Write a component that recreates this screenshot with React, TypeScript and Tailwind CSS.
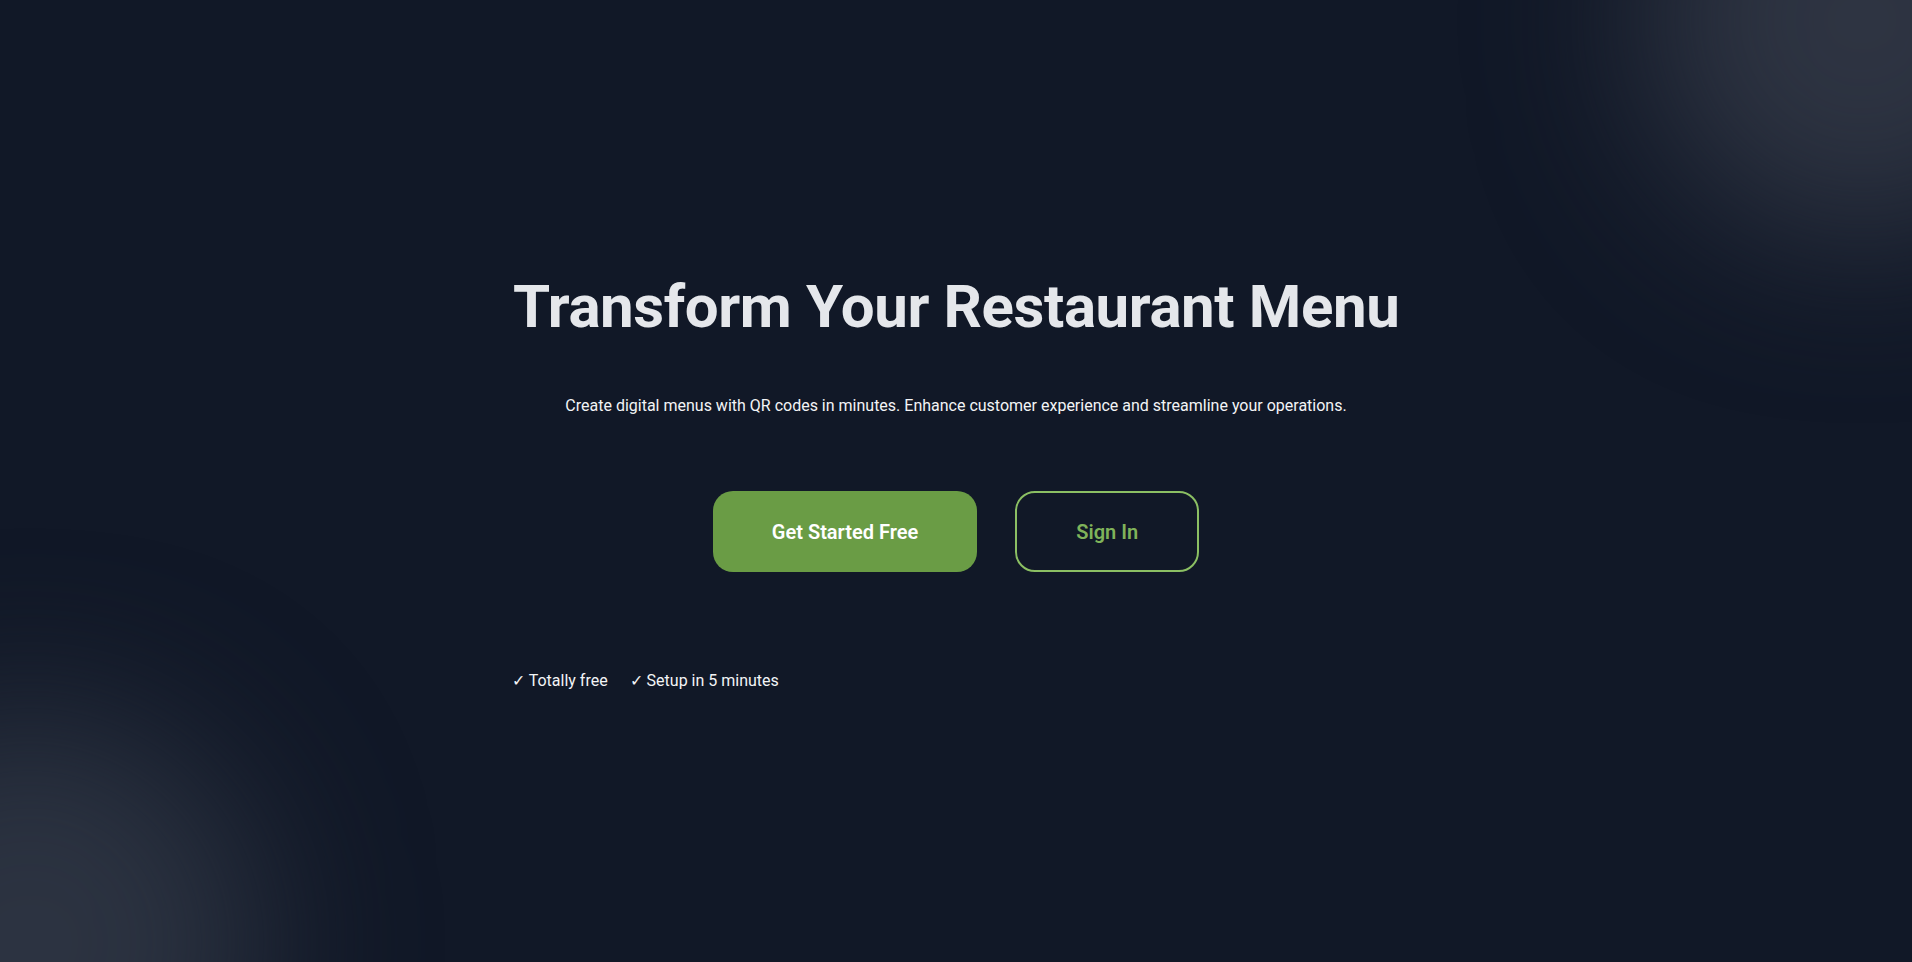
import React from "react";

const Hero = () => {
  const title = "Transform Your Restaurant Menu";
  const description =
    "Create digital menus with QR codes in minutes. Enhance customer experience and streamline your operations.";

  return (
    <div
      className="relative min-h-screen w-full overflow-hidden bg-[#111827]"
      style={{ fontFamily: "Roboto, 'Liberation Sans', sans-serif" }}
    >
      {/* soft glows */}
      <div className="pointer-events-none absolute -top-[200px] -right-[170px] h-[440px] w-[440px] rounded-full bg-[#2e3442] blur-[80px]" />
      <div className="pointer-events-none absolute -bottom-[210px] -left-[200px] h-[460px] w-[460px] rounded-full bg-[#2c3341] blur-[80px]" />

      <div className="relative flex min-h-screen items-center justify-center pt-2">
        <section className="mx-auto w-[886px]">
          <h1 className="whitespace-nowrap text-center text-6xl font-bold tracking-[-0.4px] text-[#e5e7eb]">
            {title}
          </h1>
          <p className="mt-[57px] text-center text-base text-[#f3f4f6]">{description}</p>

          <div className="mt-[73px] flex justify-center gap-[38px]">
            <button className="flex h-[81px] items-center rounded-[20px] bg-[#6a9c45] px-[59px] text-xl font-semibold text-white">
              Get Started Free
            </button>
            <button className="flex h-[81px] items-center rounded-[20px] border-2 border-[#8bbf63] px-[59px] text-xl font-semibold text-[#7fb35a]">
              Sign In
            </button>
          </div>

          <div className="-ml-px mt-[97px] flex gap-[22px] text-base text-[#f3f4f6]">
            <span>✓ Totally free</span>
            <span>✓ Setup in 5 minutes</span>
          </div>
        </section>
      </div>
    </div>
  );
};

export default function App() {
  return <Hero />;
}
